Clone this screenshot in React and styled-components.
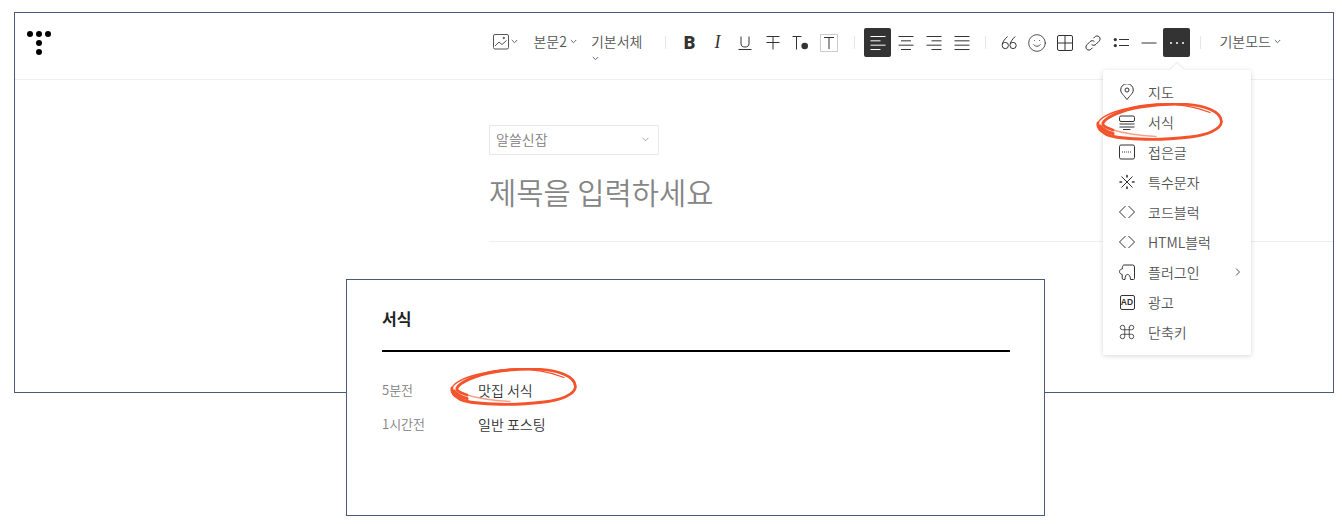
import React from "react";
import styled, { createGlobalStyle } from "styled-components";
import { Command, Smile } from "lucide-react";

const Global = createGlobalStyle`
  html, body { margin: 0; padding: 0; background: #fff; }
  body { font-family: "Noto Sans CJK KR", "Noto Sans", sans-serif; color: #333; }
`;

const Page = styled.div`
  position: relative;
  width: 1342px;
  height: 524px;
  overflow: hidden;
  padding-top: 12px;
  box-sizing: border-box;
`;

const Frame = styled.div`
  margin-left: 14px;
  width: 1320px;
  height: 381px;
  box-sizing: border-box;
  border: 1px solid #4a5a78;
  background: #fff;
`;

const Toolbar = styled.div`
  display: flex;
  justify-content: space-between;
  align-items: flex-start;
  height: 67px;
  box-sizing: border-box;
  padding: 15px 52px 0 12px;
  border-bottom: 1px solid #eeeeee;
`;

const Logo = styled.svg`
  display: block;
  width: 24px;
  height: 28px;
  fill: #000;
`;

const Tools = styled.div`
  display: flex;
  align-items: flex-start;
`;

const Dropdown = styled.div`
  display: flex;
  flex-direction: ${(p) => (p.$stack ? "column" : "row")};
  align-items: ${(p) => (p.$stack ? "flex-start" : "center")};
  gap: ${(p) => (p.$stack ? "0" : `${p.$gap ?? 3}px`)};
  margin-left: ${(p) => p.$ml || 0}px;
  height: 27px;
  font-size: 14px;
  font-weight: 350;
  line-height: 27px;
  color: #555;
  white-space: nowrap;
`;

const Sep = styled.div`
  width: 1px;
  height: 13px;
  margin: 8px ${(p) => p.$mr}px 0 ${(p) => p.$ml}px;
  background: #e6e6e6;
`;

const ToolButton = styled.div`
  display: flex;
  align-items: center;
  justify-content: center;
  width: ${(p) => (p.$active ? 27 : 28)}px;
  height: 29px;
  margin-right: ${(p) => (p.$active ? 1 : 0)}px;
  border-radius: 2px;
  background: ${(p) => (p.$active ? "#333" : "transparent")};
  color: ${(p) => (p.$active ? "#fff" : "#333")};
`;

const Glyph = styled.span`
  font-family: ${(p) => (p.$serif ? '"Liberation Serif", serif' : "Roboto, sans-serif")};
  font-style: ${(p) => (p.$serif ? "italic" : "normal")};
  font-weight: ${(p) => (p.$serif ? 400 : 900)};
  font-size: 18px;
  line-height: 29px;
  color: #333;
`;

const Icon = styled.svg`
  display: block;
  flex: none;
  width: ${(p) => p.$size || 18}px;
  height: ${(p) => p.$size || 18}px;
  fill: none;
  stroke: currentColor;
  stroke-width: 1;
`;

const Caret = styled.svg`
  display: block;
  flex: none;
  width: 7px;
  height: 5px;
  fill: none;
  stroke: #666;
  stroke-width: 1;
  margin-top: ${(p) => p.$mt || 0}px;
  margin-left: ${(p) => p.$ml || 0}px;
`;

const SmileIcon = styled(Smile)`
  display: block;
  flex: none;
`;

const CommandIcon = styled(Command)`
  display: block;
  flex: none;
  margin: 0 -1px;
  color: #333;
`;

const Body = styled.div`
  padding: 45px 0 0 474px;
`;

const CategorySelect = styled.div`
  display: flex;
  align-items: center;
  justify-content: space-between;
  width: 170px;
  height: 30px;
  box-sizing: border-box;
  padding: 0 9px 2px 6px;
  border: 1px solid #e8e8e8;
  border-radius: 1px;
  font-size: 14px;
  font-weight: 350;
  color: #808080;
`;

const TitleInput = styled.div`
  height: 87px;
  box-sizing: border-box;
  padding-top: 14px;
  border-bottom: 1px solid #eeeeee;
  font-size: 29.6px;
  line-height: 46px;
  font-weight: 350;
  color: #858585;
  white-space: nowrap;
`;

const Menu = styled.div`
  position: absolute;
  left: 1103px;
  top: 70px;
  width: 148px;
  box-sizing: border-box;
  padding: 7px 0 8px;
  background: #fff;
  border-radius: 2px;
  box-shadow: 0 1px 5px rgba(0, 0, 0, 0.16);
  &::before {
    content: "";
    position: absolute;
    left: 69px;
    top: -5px;
    width: 10px;
    height: 10px;
    background: #fff;
    transform: rotate(45deg);
    box-shadow: -1px -1px 1px rgba(0, 0, 0, 0.08);
  }
`;

const MenuRow = styled.div`
  position: relative;
  display: flex;
  align-items: center;
  gap: 13px;
  height: 30px;
  padding-left: 16px;
  padding-right: 9px;
  font-size: 14px;
  font-weight: 350;
  color: #555;
  white-space: nowrap;
  & > svg:first-child { color: #333; }
`;

const RowLabel = styled.span`
  flex: 1;
`;

const AdBadge = styled.span`
  display: flex;
  flex: none;
  align-items: center;
  justify-content: center;
  width: 15px;
  height: 15px;
  margin: 0 .5px;
  border: 1px solid #333;
  border-radius: 2px;
  box-sizing: border-box;
  font: 700 8.5px/1 "Liberation Sans", sans-serif;
  color: #333;
`;

const Modal = styled.div`
  position: absolute;
  left: 346px;
  top: 279px;
  width: 699px;
  height: 237px;
  box-sizing: border-box;
  padding: 0 34px 0 35px;
  background: #fff;
  border: 1px solid #4a5a78;
`;

const ModalTitle = styled.div`
  height: 72px;
  box-sizing: border-box;
  padding-top: 26px;
  border-bottom: 2px solid #000;
  font-size: 16px;
  line-height: 24px;
  font-weight: 700;
  color: #222;
`;

const HistoryList = styled.div`
  padding-top: 21px;
`;

const HistoryRow = styled.div`
  display: flex;
  height: 34px;
  line-height: 34px;
  font-weight: 350;
`;

const HistoryTime = styled.span`
  width: 96px;
  font-size: 13px;
  color: #808080;
`;

const HistoryName = styled.span`
  font-size: 14px;
  color: #333;
`;

const Scribble = styled.svg`
  position: absolute;
  left: ${(p) => p.$x}px;
  top: ${(p) => p.$y}px;
  width: 128px;
  height: 38px;
  fill: none;
  stroke: #f4532b;
  stroke-linecap: round;
  pointer-events: none;
`;

const Chevron = ({ mt, ml }) => (
  <Caret $mt={mt} $ml={ml} viewBox="0 0 7 5">
    <path d="M.8 1l2.7 2.7L6.2 1" />
  </Caret>
);

const Circle = ({ x, y }) => (
  <Scribble $x={x} $y={y} viewBox="0 0 128 38">
    <path d="M60 33.5C44 32.5 28 30.5 17 27" strokeWidth="1.4" opacity=".55" />
    <path d="M17 27C10 25 6 22.5 7 20C10 14 26 7 44 4C60 1.5 74 .8 87 1.2C108 2 125 8 125.5 18.5C125 27 110 32 94 34C76 36 60 37 44 36C27 35.5 14 34 9 30.5C3 27 1 24 2 20" strokeWidth="2.8" />
    <path d="M2 20C4 15 14 10 27 6.5C40 3 50 1.5 61 1C80 .5 100 4 114 9.5" strokeWidth="1.3" />
    <path d="M4 23C7 27 11 29 17 30.5" strokeWidth="3.2" />
  </Scribble>
);

const Lines = ({ rows }) => (
  <Icon $size={18} viewBox="0 0 18 18">
    {rows.map(([a, b], i) => (
      <path key={i} d={`M${a} ${2.5 + i * 4.34}H${b}`} />
    ))}
  </Icon>
);

const menuItems = [
  ["지도", (
    <Icon $size={16} viewBox="0 0 16 16" key="a">
      <path d="M8 15.5C5 11.5 1.7 9 1.7 6A6.3 6.3 0 0 1 14.3 6C14.3 9 11 11.5 8 15.5Z" />
      <circle cx="8" cy="6" r="2" />
    </Icon>
  )],
  ["서식", (
    <Icon $size={16} viewBox="0 0 16 16" key="b">
      <rect x=".5" y="2" width="15" height="5.5" rx="1.5" />
      <path d="M.5 10H15.5M.5 13H15.5M4 15.5H11.5" />
    </Icon>
  )],
  ["접은글", (
    <Icon $size={16} viewBox="0 0 16 16" key="c">
      <rect x=".5" y="1" width="15" height="14" rx="1.5" />
      <path d="M3 8H13" strokeDasharray="1 1" />
    </Icon>
  )],
  ["특수문자", (
    <Icon $size={16} viewBox="0 0 16 16" key="d">
      <path d="M2.5 2.5L13.5 13.5M13.5 2.5L2.5 13.5" />
      <path d="M8 1.5V3M8 13V14.5M1 8H2.5M13.5 8H15" strokeWidth="1.6" strokeLinecap="round" />
    </Icon>
  )],
  ["코드블럭", (
    <Icon $size={16} viewBox="0 0 16 16" key="e">
      <path d="M6.5 2L.5 8L6.5 14M9.5 2L15.5 8L9.5 14" />
    </Icon>
  )],
  ["HTML블럭", (
    <Icon $size={16} viewBox="0 0 16 16" key="f">
      <path d="M6.5 2L.5 8L6.5 14M9.5 2L15.5 8L9.5 14" />
    </Icon>
  )],
  ["플러그인", (
    <Icon $size={16} viewBox="0 0 16 16" key="g">
      <path d="M4.7 1H13.7Q15.5 1 15.5 3V14.5Q15.5 15.5 14.5 15.5H11.5C11.5 12 10 10.5 8.5 10.5C7 10.5 6 12 6 15.5H4.5Q3.2 15.5 3.2 14V10.5C1.5 10 .5 9 .5 7.7C.5 6 2 5 3.5 4.8C3.2 3 3.5 1.5 4.7 1Z" />
    </Icon>
  )],
  ["광고", <AdBadge key="h">AD</AdBadge>],
  ["단축키", <CommandIcon key="i" size={18} strokeWidth={1.1} />],
];

export default function App() {
  return (
    <Page>
      <Global />
      <Frame>
        <Toolbar>
          <Logo viewBox="0 0 24 28">
            <circle cx="3" cy="6" r="3" />
            <circle cx="12" cy="6" r="3" />
            <circle cx="21" cy="6" r="3" />
            <circle cx="12" cy="15" r="3" />
            <circle cx="12" cy="24" r="3" />
          </Logo>
          <Tools>
            <Dropdown $gap={2}>
              <Icon $size={16} viewBox="0 0 16 16">
                <rect x=".5" y=".5" width="15" height="14.5" rx="1.5" />
                <path d="M2 12L6 8L9 10.5L13.5 6.5" />
                <circle cx="10.8" cy="4" r=".7" fill="currentColor" />
              </Icon>
              <Chevron />
            </Dropdown>
            <Dropdown $ml={15}>
              본문2
              <Chevron />
            </Dropdown>
            <Dropdown $ml={14} $stack>
              기본서체
              <Chevron ml={1} mt={1} />
            </Dropdown>
            <Sep $ml={23} $mr={9} />
            <ToolButton><Glyph>B</Glyph></ToolButton>
            <ToolButton><Glyph $serif>I</Glyph></ToolButton>
            <ToolButton>
              <Icon viewBox="0 0 18 18">
                <path d="M5 2.5V9.5C5 12 6.5 13 9 13C11.5 13 13 12 13 9.5V2.5M2.5 15.5H15.5" />
              </Icon>
            </ToolButton>
            <ToolButton>
              <Icon viewBox="0 0 18 18">
                <path d="M2.5 2.5H15.5M2.5 8.5H15.5M9 2.5V15.5" />
              </Icon>
            </ToolButton>
            <ToolButton>
              <Icon viewBox="0 0 18 18">
                <path d="M.5 2.5H9.5M4.5 2.5V15.5" />
                <circle cx="12.7" cy="12" r="3.3" fill="currentColor" stroke="none" />
              </Icon>
            </ToolButton>
            <ToolButton>
              <Icon viewBox="0 0 18 18">
                <rect x=".5" y=".5" width="17" height="17" stroke="#ccc" />
                <path d="M4 3.5H14M9 3.5V15" />
              </Icon>
            </ToolButton>
            <Sep $ml={11} $mr={9} />
            <ToolButton $active>
              <Lines rows={[[1.5, 16.5], [1.5, 11.5], [1.5, 16.5], [1.5, 11.5]]} />
            </ToolButton>
            <ToolButton>
              <Lines rows={[[1.5, 16.5], [4, 14], [1.5, 16.5], [4, 14]]} />
            </ToolButton>
            <ToolButton>
              <Lines rows={[[1.5, 16.5], [6.5, 16.5], [1.5, 16.5], [6.5, 16.5]]} />
            </ToolButton>
            <ToolButton>
              <Lines rows={[[1.5, 16.5], [1.5, 16.5], [1.5, 16.5], [1.5, 16.5]]} />
            </ToolButton>
            <Sep $ml={9} $mr={9} />
            <ToolButton>
              <Icon viewBox="0 0 18 18">
                <path d="M7.5 2.5C4.5 5.5 2.2 8 2.2 11.5A3.1 3.1 0 1 0 5.3 8.4C4 8.4 3 9 2.4 10M15.2 2.5C12.2 5.5 10 8 10 11.5A3.1 3.1 0 1 0 13.1 8.4C11.8 8.4 10.8 9 10.2 10" />
              </Icon>
            </ToolButton>
            <ToolButton>
              <SmileIcon size={20} strokeWidth={1} />
            </ToolButton>
            <ToolButton>
              <Icon $size={16} viewBox="0 0 16 16">
                <rect x=".5" y=".5" width="15" height="15" rx="1.5" />
                <path d="M8 .5V15.5M.5 8H15.5" />
              </Icon>
            </ToolButton>
            <ToolButton>
              <Icon $size={16} viewBox="0 0 16 16">
                <path d="M6.6 9.4C8 10.8 9.8 10.5 11 9.3L14 6.3C15.4 4.9 15.4 3 14.2 1.8C13 .6 11 .6 9.7 2L8.4 3.3" />
                <path d="M9.4 6.6C8 5.2 6.2 5.5 5 6.7L2 9.7C.6 11.1 .6 13 1.8 14.2C3 15.4 5 15.4 6.3 14L7.6 12.7" />
              </Icon>
            </ToolButton>
            <ToolButton>
              <Icon $size={16} viewBox="0 0 16 16">
                <circle cx="2.3" cy="4.6" r="1.6" fill="currentColor" stroke="none" />
                <circle cx="2.3" cy="10.6" r="1.6" fill="currentColor" stroke="none" />
                <path d="M6 4.5H16M6 10.5H16" />
              </Icon>
            </ToolButton>
            <ToolButton>
              <Icon $size={16} viewBox="0 0 16 16">
                <path d="M.5 8H15.5" />
              </Icon>
            </ToolButton>
            <ToolButton $active>
              <Icon $size={16} viewBox="0 0 16 16">
                <circle cx="2" cy="8" r="1" fill="currentColor" stroke="none" />
                <circle cx="8" cy="8" r="1" fill="currentColor" stroke="none" />
                <circle cx="14" cy="8" r="1" fill="currentColor" stroke="none" />
              </Icon>
            </ToolButton>
            <Sep $ml={9} $mr={0} />
            <Dropdown $ml={18}>
              기본모드
              <Chevron />
            </Dropdown>
          </Tools>
        </Toolbar>
        <Body>
          <CategorySelect>
            알쓸신잡
            <Caret viewBox="0 0 7 5" $ml={0}>
              <path d="M.5 .8L3.5 3.8L6.5 .8" stroke="#aaa" />
            </Caret>
          </CategorySelect>
          <TitleInput>제목을 입력하세요</TitleInput>
        </Body>
      </Frame>

      <Modal>
        <ModalTitle>서식</ModalTitle>
        <HistoryList>
          <HistoryRow>
            <HistoryTime>5분전</HistoryTime>
            <HistoryName>맛집 서식</HistoryName>
          </HistoryRow>
          <HistoryRow>
            <HistoryTime>1시간전</HistoryTime>
            <HistoryName>일반 포스팅</HistoryName>
          </HistoryRow>
        </HistoryList>
      </Modal>
      <Circle x={450} y={368} />

      <Menu>
        {menuItems.map(([label, icon]) => (
          <MenuRow key={label}>
            {icon}
            <RowLabel>{label}</RowLabel>
            {label === "플러그인" && (
              <Icon $size={8} viewBox="0 0 8 8">
                <path d="M2 .5L5.5 4L2 7.5" />
              </Icon>
            )}
          </MenuRow>
        ))}
      </Menu>
      <Circle x={1096} y={103} />
    </Page>
  );
}
